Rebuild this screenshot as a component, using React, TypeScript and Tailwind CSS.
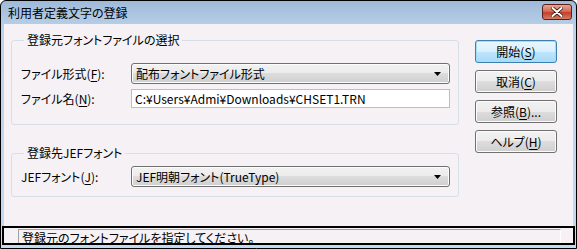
import React from "react";

const FONT = "font-['Noto_Sans_CJK_JP','Noto_Sans',sans-serif] [font-feature-settings:'palt'] text-[12px] leading-[14px] text-black";

function Btn({ label, mnemonic, rest, primary }: { label: string; mnemonic: string; rest?: string; primary?: boolean }) {
  return (
    <button
      type="button"
      className={
        "h-[23px] w-[82px] rounded-[3px] border flex items-center justify-center " +
        (primary
          ? "border-[#3c7fb1] bg-[linear-gradient(#eaf6fd_0%,#d9f0fc_50%,#bee6fd_50%,#a7d9f5_100%)] shadow-[inset_0_0_0_1px_#a0e0fb]"
          : "border-[#707070] bg-[linear-gradient(#f2f2f2_0%,#ebebeb_50%,#dddddd_50%,#cfcfcf_100%)] shadow-[inset_0_0_0_1px_#fcfcfc]")
      }
    >
      <span>
        {label}(<span className="underline underline-offset-2">{mnemonic}</span>){rest}
      </span>
    </button>
  );
}

function Combo({ value }: { value: string }) {
  return (
    <div className="h-[21px] w-[319px] rounded-[3px] border border-[#707070] bg-[linear-gradient(#f2f2f2_0%,#ebebeb_50%,#dddddd_50%,#cfcfcf_100%)] shadow-[inset_0_0_0_1px_#fcfcfc] flex items-center pl-[4px] pr-[8px]">
      <span className="flex-1 whitespace-nowrap">{value}</span>
      <svg width="7" height="4" viewBox="0 0 7 4">
        <path d="M0 0h7L3.5 4z" fill="#000" />
      </svg>
    </div>
  );
}

function Row({ label, mnemonic, children }: { label: string; mnemonic: string; children: React.ReactNode }) {
  return (
    <div className="flex items-center">
      <span className="w-[111px] pl-[1px]">
        {label}(<span className="underline underline-offset-2">{mnemonic}</span>):
      </span>
      {children}
    </div>
  );
}

export default function App() {
  return (
    <div className={"w-[577px] h-[249px] " + FONT}>
      <div className="w-full h-full flex flex-col rounded-t-[6px] border border-black bg-[linear-gradient(#9fbad9,#bcd3eb_30px,#c4daf0)] overflow-hidden">
        {/* title bar */}
        <div className="h-[23px] shrink-0 flex items-center pl-[7px] pr-[4px]">
          <span className="flex-1 pt-[1px]">利用者定義文字の登録</span>
          <div className="mb-[1px] h-[16px] w-[30px] rounded-[3px] border border-[#5b1f18] bg-[linear-gradient(#e8a597_0%,#d66a55_45%,#c2402a_55%,#d77b62_100%)] flex items-center justify-center">
            <svg width="12" height="10" viewBox="0 0 12 10">
              <path d="M1.5 1l9 8M10.5 1l-9 8" stroke="#3a1410" strokeWidth="3.6" strokeLinecap="round" />
              <path d="M1.5 1l9 8M10.5 1l-9 8" stroke="#fff" strokeWidth="2" strokeLinecap="round" />
            </svg>
          </div>
        </div>
        {/* client */}
        <div className="flex-1 mx-[3px] mb-[3px] bg-[#f5f1f5] flex flex-col">
          <div className="flex-1 flex pl-[7px] pt-[9px]">
            <div className="w-[446px] flex flex-col">
              <fieldset className="h-[92px] rounded-[3px] border border-[#d5dfe5] px-[8px] pt-[16px]">
                <legend className="ml-[4px] px-[3px]">登録元フォントファイルの選択</legend>
                <div className="flex flex-col gap-[5px]">
                  <Row label="ファイル形式" mnemonic="F">
                    <Combo value="配布フォントファイル形式" />
                  </Row>
                  <Row label="ファイル名" mnemonic="N">
                    <div className="h-[19px] w-[319px] border border-[#a5c4e0] bg-white flex items-center pl-[3px] whitespace-nowrap">
                      C:¥Users¥Admi¥Downloads¥CHSET1.TRN
                    </div>
                  </Row>
                </div>
              </fieldset>
              <fieldset className="mt-[21px] h-[51px] rounded-[3px] border border-[#d5dfe5] px-[8px] pt-[6px]">
                <legend className="ml-[4px] px-[3px]">登録先JEFフォント</legend>
                <Row label="JEFフォント" mnemonic="J">
                  <Combo value="JEF明朝フォント(TrueType)" />
                </Row>
              </fieldset>
            </div>
            <div className="ml-[18px] pt-[7px] flex flex-col gap-[7px]">
              <Btn label="開始" mnemonic="S" primary />
              <Btn label="取消" mnemonic="C" />
              <Btn label="参照" mnemonic="B" rest="..." />
              <Btn label="ヘルプ" mnemonic="H" />
            </div>
          </div>
          <div className="h-[19px] mx-[-2px] border-2 border-black bg-[#f5f1f5] flex pl-[14px] pr-[12px] pt-[1px]">
            <div className="flex-1 border-l border-t border-[#a0a0a0] border-r border-r-white pl-[3px] leading-[15px] whitespace-nowrap">
              登録元のフォントファイルを指定してください。
            </div>
          </div>
        </div>
      </div>
    </div>
  );
}
